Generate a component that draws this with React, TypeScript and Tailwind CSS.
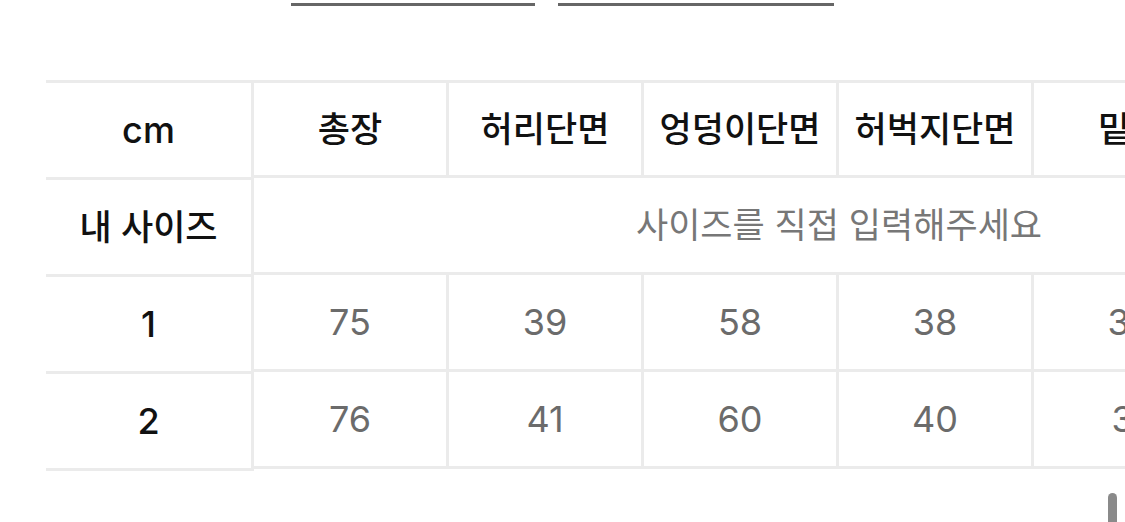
import React from 'react';

const font = { fontFamily: 'Inter, "Noto Sans CJK KR", sans-serif' };

const columns = ['총장', '허리단면', '엉덩이단면', '허벅지단면', '밑위', '밑단단면'];

const sizes = [
  { label: '1', values: ['75', '39', '58', '38', '30', '19'] },
  { label: '2', values: ['76', '41', '60', '40', '31', '20'] },
];

export default function App() {
  return (
    <div className="w-[1125px] h-[522px] overflow-hidden bg-white relative" style={font}>
      {/* tab underlines */}
      <div className="flex justify-center gap-[23px] pt-[3px]">
        <div className="w-[244px] h-[3px] bg-[#666666]" />
        <div className="w-[276px] h-[3px] bg-[#666666]" />
      </div>

      {/* size table */}
      <div className="flex pl-[46px] mt-[74px]">
        <div className="w-[208px] shrink-0 border-t-[3px] border-r-[3px] border-[#ebebeb]">
          <div className="h-[97px] flex items-center justify-center border-b-[3px] border-[#ebebeb] text-[36px] font-medium text-[#111111]">
            cm
          </div>
          <div className="h-[97px] flex items-center justify-center border-b-[3px] border-[#ebebeb] text-[35px] font-medium text-[#111111]">
            내 사이즈
          </div>
          {sizes.map(s => (
            <div key={s.label} className="h-[97px] flex items-center justify-center border-b-[3px] border-[#ebebeb] text-[36px] font-medium text-[#111111]">
              {s.label}
            </div>
          ))}
        </div>

        <div className="shrink-0 border-t-[3px] border-[#ebebeb]">
          <div className="flex h-[95px]">
            {columns.map(c => (
              <div key={c} className="w-[195px] shrink-0 flex items-center justify-center border-r-[3px] border-b-[3px] border-[#ebebeb] text-[35px] font-medium text-[#111111] whitespace-nowrap">
                {c}
              </div>
            ))}
          </div>
          <div className="h-[97px] w-[1170px] flex items-center justify-center border-b-[3px] border-[#ebebeb] text-[35px] text-[#777777]">
            사이즈를 직접 입력해주세요
          </div>
          {sizes.map(s => (
            <div key={s.label} className="flex h-[97px]">
              {s.values.map((v, i) => (
                <div key={i} className="w-[195px] shrink-0 flex items-center justify-center border-r-[3px] border-b-[3px] border-[#ebebeb] text-[36px] text-[#6b6b6b]">
                  {v}
                </div>
              ))}
            </div>
          ))}
        </div>
      </div>

      {/* scroll indicator */}
      <div className="absolute left-[1108px] top-[493px] w-[9px] h-[40px] rounded-full bg-[#8a8a8a]" />
    </div>
  );
}
